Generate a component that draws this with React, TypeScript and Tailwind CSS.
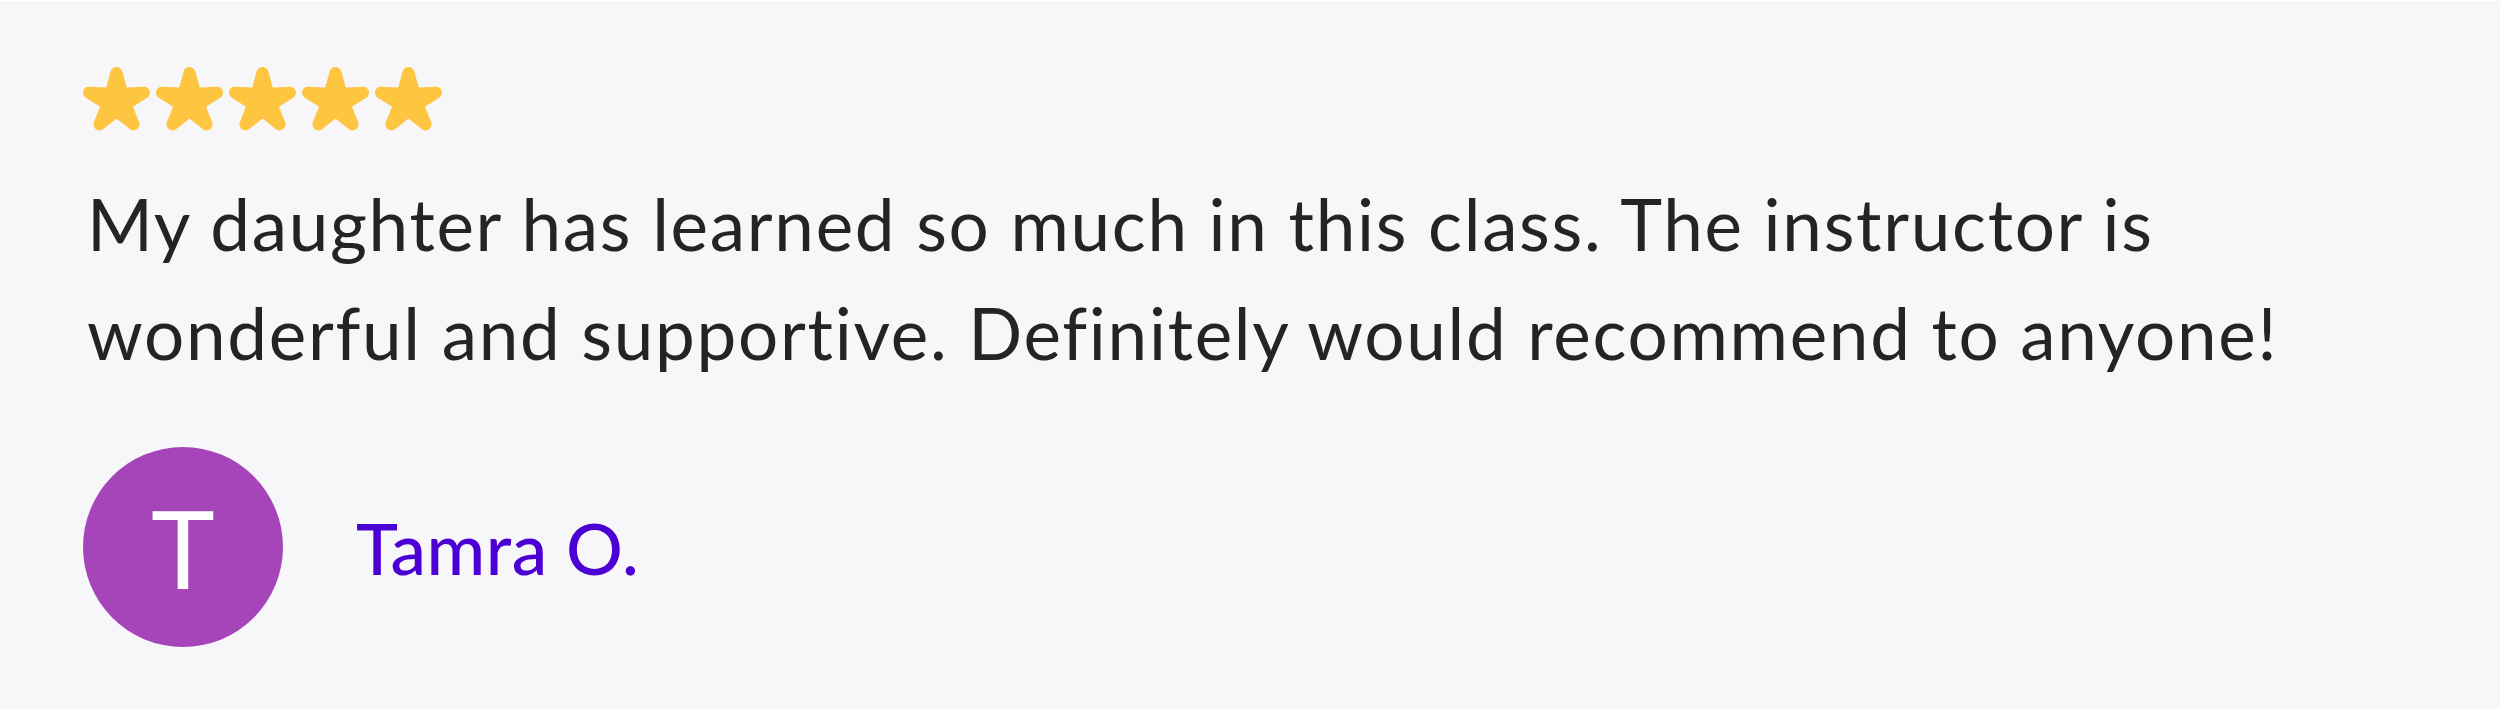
import React from "react";

function Star() {
  return (
    <svg width="67" height="64" viewBox="0 0 66 64" preserveAspectRatio="none" aria-hidden="true">
      <path
        d="M33 6 L38.6 26.7 L60.01 25.62 L42 37.3 L49.69 57.38 L33 43.9 L16.31 57.38 L24 37.3 L5.99 25.62 L27.4 26.7 Z"
        fill="#FDC540"
        stroke="#FDC540"
        strokeWidth="12"
        strokeLinejoin="round"
      />
    </svg>
  );
}

export default function App() {
  return (
    <div
      className="h-[709px] w-[2500px] bg-[#f7f7f9] border-t border-white pl-[83px] pt-[66px]"
      style={{ fontFamily: "Lato, 'Noto Sans', sans-serif" }}
    >
      <div className="flex gap-[6px]">
        <Star />
        <Star />
        <Star />
        <Star />
        <Star />
      </div>
      <p className="mt-[38px] w-[2300px] pl-[4px] text-[71px] leading-[109px] tracking-[1.7px] text-[#242424] [font-variant-ligatures:none]">
        My daughter has learned so much in this class. The instructor is wonderful and supportive. Definitely would recommend to anyone!
      </p>
      <div className="mt-[60px] flex items-center">
        <div className="flex h-[200px] w-[200px] items-center justify-center rounded-full bg-[#a545b9] text-[108px] leading-none text-white">
          T
        </div>
        <span className="ml-[73px] text-[71px] font-medium leading-none tracking-[0.5px] text-[#4b01d4]">Tamra O.</span>
      </div>
    </div>
  );
}
